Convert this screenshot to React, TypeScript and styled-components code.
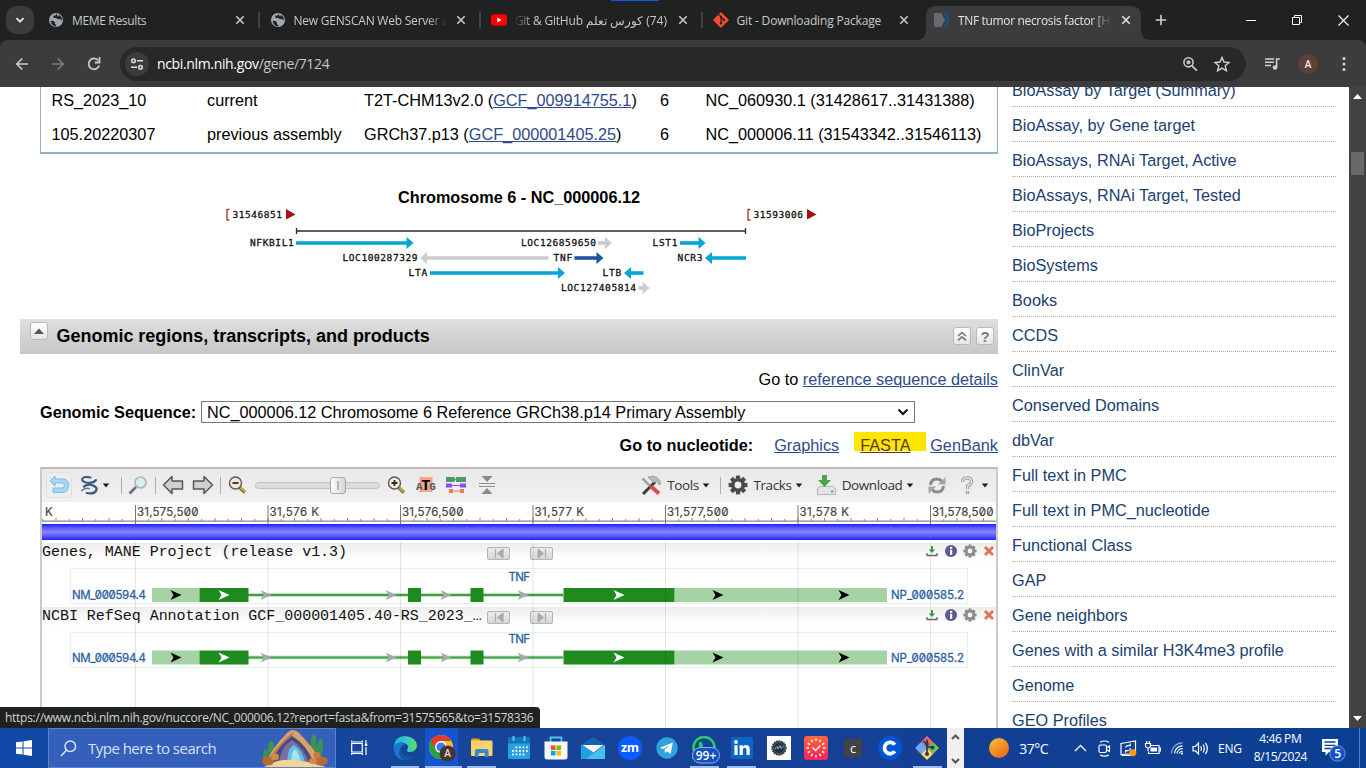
import React from "react";
import styled, { createGlobalStyle, css } from "styled-components";

const ui = `"Open Sans", "Noto Sans", sans-serif`;
const arial = `"Liberation Sans", Arial, sans-serif`;

const Global = createGlobalStyle`
  * { box-sizing: border-box; }
  html, body { margin: 0; padding: 0; }
  body { width: 1366px; height: 768px; overflow: hidden; background: #fff; }
  svg { display: block; flex: none; }
`;

const Screen = styled.div`
  position: relative;
  width: 1366px;
  height: 768px;
  display: flex;
  flex-direction: column;
  overflow: hidden;
  font-family: ${arial};
`;

/* ---------- browser chrome ---------- */

const TabStrip = styled.div`
  position: relative;
  height: 40px;
  flex: none;
  display: flex;
  background: #202221;
  font-family: ${ui};
`;
const LoadMark = styled.div`
  position: absolute;
  left: 611px;
  top: 0;
  width: 48px;
  height: 1px;
  background: #0b57ff;
`;
const TabSearch = styled.div`
  width: 28px;
  height: 28px;
  margin: 6px 4px 0 6px;
  border-radius: 10px;
  background: #3b3b3b;
  display: flex;
  align-items: center;
  justify-content: center;
  flex: none;
`;
const Tab = styled.div<{ $active?: boolean; $sep?: boolean }>`
  position: relative;
  width: 221.5px;
  height: 40px;
  padding-left: 10px;
  display: flex;
  align-items: center;
  flex: none;
  color: ${(p) => (p.$active ? "#e3e3e3" : "#c7c9c8")};
  ${(p) =>
    p.$sep &&
    css`
      &::after {
        content: "";
        position: absolute;
        right: 0;
        top: 12px;
        width: 2px;
        height: 16px;
        background: #414342;
      }
    `}
  > * { position: relative; }
`;
const TabShape = styled.svg`
  && { position: absolute; }
  left: -8px;
  top: 6px;
`;
const TabTitle = styled.div<{ $fade?: "left" | "right"; $ls?: number }>`
  width: 152px;
  margin-left: 8px;
  margin-right: 7.5px;
  overflow: hidden;
  white-space: nowrap;
  font-size: 12px;
  line-height: 21px;
  letter-spacing: ${(p) => p.$ls ?? -0.2}px;
  direction: ${(p) => (p.$fade === "left" ? "rtl" : "ltr")};
  ${(p) => p.$fade && `mask-image: linear-gradient(to ${p.$fade}, #000 88%, transparent 101%);`}
`;
const NewTab = styled.div`
  width: 31px;
  height: 40px;
  display: flex;
  align-items: center;
  justify-content: center;
`;
const WinButtons = styled.div`
  margin-left: auto;
  display: flex;
`;
const WinButton = styled.div`
  width: 46px;
  height: 40px;
  display: flex;
  align-items: center;
  justify-content: center;
`;
const ToolbarBack = styled.div`
  background: #202221;
  flex: none;
`;
const Toolbar = styled.div`
  height: 47px;
  display: flex;
  align-items: center;
  padding-left: 4px;
  background: #3c3c3c;
  border-radius: 8px 8px 0 0;
  font-family: ${ui};
`;
const NavButton = styled.div`
  width: 36px;
  display: flex;
  justify-content: center;
`;
const Omnibox = styled.div`
  width: 1126px;
  height: 34px;
  margin-left: 8px;
  padding: 0 15px 0 5px;
  border-radius: 17px;
  background: #282828;
  display: flex;
  align-items: center;
`;
const SiteChip = styled.div`
  width: 24px;
  height: 24px;
  border-radius: 50%;
  background: #3c3c3c;
  display: flex;
  align-items: center;
  justify-content: center;
`;
const Url = styled.div`
  margin-left: 8px;
  flex: 1;
  font-size: 14px;
  line-height: 20px;
  letter-spacing: -0.35px;
  color: #fff;
  span { color: #c7c7c7; }
`;
const OmniIcon = styled.div`
  margin-left: 15px;
`;
const MediaIcon = styled.svg`
  margin: 0 10px 0 18px;
`;
const Avatar = styled.div`
  width: 20px;
  height: 20px;
  margin: 0 8px;
  border-radius: 50%;
  background: #5d4037;
  color: #f1ebe9;
  font-size: 10px;
  font-weight: 600;
  line-height: 20px;
  text-align: center;
`;

/* ---------- page ---------- */

const Viewport = styled.div`
  height: 641px;
  flex: none;
  display: flex;
  overflow: hidden;
  background: #fff;
`;
const Main = styled.main`
  width: 978px;
  margin-left: 20px;
  flex: none;
  font-size: 16.25px;
`;
const Assemblies = styled.div`
  height: 67px;
  margin-left: 20px;
  border: solid #97b0c8;
  border-width: 0 1px 2px;
  overflow: hidden;
`;
const AssemblyRow = styled.div`
  display: grid;
  grid-template-columns: 155.5px 157px 296px 45.5px 1fr;
  height: 34px;
  line-height: 27px;
  padding-left: 10.500px;
  white-space: nowrap;
`;
const Link = styled.a<{ $marked?: boolean }>`
  color: ${(p) => (p.$marked ? "#61381a" : "#2f4a8b")};
  text-decoration: underline;
  text-decoration-thickness: 1px;
`;
const MapTitle = styled.h3`
  margin: 33px 0 0 20px;
  height: 20px;
  line-height: 20px;
  font-size: 16.25px;
  text-align: center;
`;
const MapArea = styled.div`
  height: 112px;
  margin-left: 180px;
`;
const SectionBar = styled.div`
  height: 35px;
  display: flex;
  align-items: center;
  padding: 0 4px 0 10px;
  background: linear-gradient(#dfdfdf, #c7c7c7);
`;
const SectionTitle = styled.h2`
  margin: 0 0 0 8.500px;
  flex: 1;
  font-size: 18px;
  line-height: 35px;
  letter-spacing: -0.02px;
`;
const SmallButton = styled.div<{ $raised?: boolean }>`
  width: 18px;
  height: 18px;
  margin-left: ${(p) => (p.$raised ? 0 : 5)}px;
  margin-bottom: ${(p) => (p.$raised ? 12 : 1)}px;
  border-radius: 3px;
  border: 1px solid #b9b9b9;
  background: linear-gradient(#fff, #e6e6e6);
  display: flex;
  align-items: center;
  justify-content: center;
  color: #7c7c7c;
  font: bold 15px/17px ${arial};
`;
const DetailLine = styled.div`
  height: 20px;
  margin-top: 15px;
  line-height: 20px;
  text-align: right;
`;
const SequenceLine = styled.div`
  display: flex;
  align-items: center;
  height: 22px;
  margin: 12px 0 0 20px;
  b { width: 161px; }
`;
const Select = styled.div`
  width: 714px;
  height: 22px;
  padding: 0 5px;
  border: 1px solid #767676;
  display: flex;
  align-items: center;
  justify-content: space-between;
  line-height: 20px;
`;
const NucleotideLine = styled.div`
  display: flex;
  justify-content: flex-end;
  height: 20px;
  margin-top: 9px;
  line-height: 26px;
  b { margin-right: 21px; }
`;
const Marker = styled.span`
  width: 72px;
  height: 19px;
  margin: 0 4px 0 15px;
  padding-left: 6px;
  background: #ffe600;
`;

const Viewer = styled.section`
  position: relative;
  height: 262px;
  margin: 15px 0 0 20px;
  border: solid #cacaca;
  border-width: 2px 2px 0 2px;
  border-top-color: #c3b9b9;
`;
const ViewerTools = styled.div`
  height: 33px;
  padding-bottom: 1px;
  display: flex;
  align-items: center;
  background: linear-gradient(#e9e9e9, #f0f0f0);
  font-family: ${ui};
  font-size: 13.5px;
  color: #333;
`;
const Slot = styled.div<{ $ml: number; $w: number }>`
  margin-left: ${(p) => p.$ml}px;
  width: ${(p) => p.$w}px;
  flex: none;
  display: flex;
  justify-content: center;
  white-space: nowrap;
  letter-spacing: -0.4px;
`;
const Divider = styled.div<{ $ml: number }>`
  margin-left: ${(p) => p.$ml}px;
  width: 1px;
  height: 17px;
  flex: none;
  background: #b6ac9c;
`;
const Framed = styled.div`
  width: 26px;
  height: 26px;
  border: 1px solid #dbe0e6;
  border-radius: 4px;
  background: #eceef0;
  display: flex;
  align-items: center;
  justify-content: center;
`;
const Slider = styled.div`
  width: 125px;
  height: 7px;
  margin-top: 1px;
  border: 1px solid #c3c3c3;
  border-radius: 4px;
  background: #dcdcdc;
  display: flex;
  align-items: center;
  padding-left: 74px;
`;
const SliderThumb = styled.div`
  width: 16px;
  height: 17px;
  flex: none;
  border: 1px solid #a9a9a9;
  border-radius: 3px;
  background: linear-gradient(90deg, #fff, #d4d4d4);
  display: flex;
  align-items: center;
  justify-content: center;
  &::after { content: ""; width: 2px; height: 9px; background: #b4b4b4; }
`;
const SequenceBar = styled.div`
  height: 16px;
  margin-bottom: 3px;
  background: linear-gradient(#2020ff, #5a5aff 25%, #8484ff 50%, #5a5aff 75%, #2020ff);
`;
const Track = styled.div`
  height: 64px;
`;
const TrackHead = styled.div`
  height: 24px;
  display: flex;
  align-items: flex-start;
  background: linear-gradient(#ededed, #fdfdfd 60%, #fff);
`;
const TrackName = styled.div`
  width: 445px;
  height: 18px;
  line-height: 19px;
  font-family: "Liberation Mono", monospace;
  font-size: 15px;
  letter-spacing: -0.03px;
  white-space: pre;
  color: #111;
`;
const StepButton = styled.div<{ $gap?: boolean }>`
  width: 23px;
  height: 13px;
  margin-top: 4px;
  margin-left: ${(p) => (p.$gap ? 20 : 0)}px;
  border: 1px solid #b4b4b4;
  border-radius: 2px;
  background: linear-gradient(#ececec, #d6d6d6);
  display: flex;
  align-items: center;
  justify-content: center;
`;
const TrackIcons = styled.div`
  margin: 1px 0 0 auto;
  display: flex;
  gap: 5px;
`;
const GridOverlay = styled.svg`
  position: absolute;
  left: 0;
  top: 73px;
  pointer-events: none;
`;
const TrackCanvas = styled.svg`
  font-family: Inter, sans-serif;
  font-size: 11.5px;
  font-feature-settings: "zero";
`;

const Side = styled.aside`
  width: 324px;
  margin: -15px 13px 0 14px;
  flex: none;
`;
const SideItem = styled.div`
  height: 35px;
  line-height: 36px;
  border-bottom: 1px dotted #b5b5b5;
  color: #20406f;
  font-size: 16.25px;
  white-space: nowrap;
`;
const ScrollTrack = styled.div`
  width: 17px;
  flex: none;
  background: #424242;
  display: flex;
  flex-direction: column;
  align-items: center;
  padding: 7px 0;
`;
const ScrollThumb = styled.div`
  width: 13px;
  height: 23px;
  margin: 53px 0 auto;
  background: #686868;
`;
const StatusBubble = styled.div`
  position: absolute;
  left: 0;
  top: 707px;
  width: 540px;
  height: 21px;
  padding-left: 5px;
  border-radius: 0 4px 0 0;
  background: #202221;
  color: #d2d4d3;
  font: 12px/21px ${ui};
  letter-spacing: -0.27px;
  white-space: nowrap;
`;

/* ---------- taskbar ---------- */

const Taskbar = styled.div`
  height: 40px;
  flex: none;
  display: flex;
  background: linear-gradient(90deg, #1149a8, #17459a 35%, #143f93 68%, #0a3f93);
  font-family: ${ui};
  color: #fff;
`;
const StartButton = styled.div`
  width: 48px;
  display: flex;
  align-items: center;
  justify-content: center;
`;
const SearchBox = styled.div`
  width: 288px;
  height: 40px;
  border: 1px solid #5d80ca;
  background: #345fbb;
  display: flex;
  align-items: center;
  padding-left: 11px;
  color: #d7e1f5;
  font-size: 15px;
  letter-spacing: -0.52px;
  span { margin-left: 11px; width: 173px; white-space: nowrap; }
`;
const TaskIcon = styled.div<{ $w: number; $ml?: number; $on?: boolean; $run?: boolean }>`
  position: relative;
  width: ${(p) => p.$w}px;
  margin-left: ${(p) => p.$ml ?? 0}px;
  height: 40px;
  flex: none;
  display: flex;
  align-items: center;
  justify-content: center;
  background: ${(p) => (p.$on ? "#1454cc" : "transparent")};
  ${(p) =>
    p.$run &&
    css`
      &::after {
        content: "";
        position: absolute;
        bottom: 0;
        left: ${p.$on ? "0" : "4px"};
        right: ${p.$on ? "-4px" : "4px"};
        height: 2px;
        background: #a3bdf3;
      }
    `}
`;
const Spinner = styled.div`
  width: 17px;
  margin-left: 1.5px;
  background: #f0f0f0;
  display: flex;
  flex-direction: column;
  justify-content: space-between;
  align-items: center;
  padding: 6px 0 4px;
  flex: none;
`;
const Weather = styled.div`
  display: flex;
  align-items: center;
  margin-left: 25px;
  width: 80px;
  flex: none;
  font-size: 14px;
  letter-spacing: -0.5px;
  span { margin-left: 10px; }
`;
const TrayItem = styled.div<{ $w: number }>`
  width: ${(p) => p.$w}px;
  display: flex;
  align-items: center;
  justify-content: center;
  flex: none;
  font-size: 12px;
  letter-spacing: -0.3px;
`;
const Clock = styled.div`
  width: 64px;
  padding-top: 2px;
  flex: none;
  text-align: center;
  white-space: nowrap;
  font-size: 12px;
  line-height: 18px;
  letter-spacing: -0.42px;
`;
const DesktopEdge = styled.div`
  width: 1px;
  margin-left: 2px;
  background: #5b80bd;
`;

/* ---------- icons ---------- */

const Globe = () => (
  <svg width="16" height="16" viewBox="0 0 16 16">
    <circle cx="8" cy="8" r="7" fill="#a3a8af" />
    <path d="M2.6 8.8l3 .2 1.4 1.5v1.6l1.4 1.2-.2 1.2A6 6 0 0 1 2.6 8.8zM8.3 1.8l-.8 1.7H5.7L5 5l1 1h2.4l1.3 1.2 2.4-.2L14 8.7A6 6 0 0 0 11 3l-1 1.6z" fill="#242625" />
    <path d="M9.4 8.3l3 .6-.7 2.1-1.5.6z" fill="#a3a8af" />
  </svg>
);
const YouTube = () => (
  <svg width="16" height="16" viewBox="0 0 16 16">
    <rect y="2.2" width="16" height="11.6" rx="3" fill="#f00" />
    <path d="M6.3 5.4v5.2L10.6 8z" fill="#fff" />
  </svg>
);
const Git = () => (
  <svg width="16" height="16" viewBox="0 0 16 16">
    <path d="M8 .2L15.8 8 8 15.8.2 8z" fill="#f4502f" stroke="#f4502f" strokeWidth=".4" strokeLinejoin="round" />
    <path d="M5.8 2.6L8 4.8v6.500M8 5.200l3 3" stroke="#28201e" strokeWidth="1.2" fill="none" />
    <circle cx="8" cy="4.900" r="1.2" fill="#28201e" />
    <circle cx="8" cy="11.200" r="1.2" fill="#28201e" />
    <circle cx="11" cy="8" r="1.2" fill="#28201e" />
  </svg>
);
const Ncbi = () => (
  <svg width="16" height="16" viewBox="0 0 16 16">
    <path d="M0 1h7l4 7-4 7H1.500Q0 15 0 13z" fill="#666a72" />
    <path d="M10 1h2.600l3.400 7-3.400 7H10l3-7z" fill="#14528f" />
  </svg>
);
const CloseX = ({ color = "#c7c9c8" }: { color?: string }) => (
  <svg width="16" height="16" viewBox="0 0 16 16">
    <path d="M4.300 4.300l7.400 7.400M11.700 4.300l-7.400 7.400" stroke={color} strokeWidth="1.600" />
  </svg>
);
const Caret = () => (
  <svg width="8" height="5" viewBox="0 0 8 5">
    <path d="M.8.500h6.400L4 4.600z" fill="#1c1c1c" />
  </svg>
);
const Lens = ({ sign }: { sign: "+" | "-" }) => (
  <svg width="20" height="20" viewBox="0 0 20 20">
    <path d="M12.500 12.500l5.500 5" stroke="#7d7020" strokeWidth="3.400" />
    <path d="M13 12.500l5 4.400" stroke="#d6c95f" strokeWidth="1.100" />
    <circle cx="8.500" cy="8" r="6" fill="#f2ead8" stroke="#5e5a55" strokeWidth="1.400" />
    <path d={sign === "+" ? "M5.500 8h6M8.500 5v6" : "M5.500 8h6"} stroke="#2d2a28" strokeWidth="1.800" />
  </svg>
);
const BlockArrow = ({ flip }: { flip?: boolean }) => (
  <svg width="22" height="20" viewBox="0 0 22 20">
    <path
      transform={flip ? "translate(22 0) scale(-1 1)" : undefined}
      d="M1.500 10L10 1.500V6h10.500v8H10v4.500z"
      fill="#cfcfcf"
      stroke="#555"
      strokeWidth="1.500"
      strokeLinejoin="round"
    />
  </svg>
);
const Gear = ({ size, color, hole }: { size: number; color: string; hole: string }) => (
  <svg width={size} height={size} viewBox="0 0 20 20">
    {[0, 45, 90, 135].map((a) => (
      <rect key={a} x="7.900" y=".6" width="4.200" height="18.800" fill={color} transform={`rotate(${a} 10 10)`} />
    ))}
    <circle cx="10" cy="10" r="7" fill={color} />
    <circle cx="10" cy="10" r="3.400" fill={hole} />
  </svg>
);
const TrackTools = () => (
  <>
    <svg width="14" height="14" viewBox="0 0 14 14">
      <path d="M7 2v5" stroke="#35a435" strokeWidth="2" />
      <path d="M3.700 5.500h6.600L7 9z" fill="#35a435" />
      <path d="M2 9v2.500h10V9" stroke="#666" strokeWidth="1.300" fill="none" />
    </svg>
    <svg width="14" height="14" viewBox="0 0 14 14">
      <circle cx="7" cy="7" r="6" fill="#5b5a97" />
      <rect x="6" y="5.800" width="2.200" height="5" fill="#fff" />
      <rect x="6" y="2.800" width="2.200" height="2" fill="#fff" />
    </svg>
    <Gear size={14} color="#8a8a8a" hole="#f6f6f6" />
    <svg width="14" height="14" viewBox="0 0 14 14">
      <path d="M3 3l8 8M11 3l-8 8" stroke="#df7556" strokeWidth="3" />
    </svg>
  </>
);

/* ---------- chromosome map ---------- */

const CYAN = "#02a5d3";
const GREY = "#cbcbcb";
type Gene = { name: string; tx: number; from: number; to: number; y: number; color: string };
const genes: Gene[] = [
  { name: "NFKBIL1", tx: 250, from: 296, to: 413.5, y: 243, color: CYAN },
  { name: "LOC100287329", tx: 342.5, from: 548.5, to: 420, y: 258, color: GREY },
  { name: "LTA", tx: 408.5, from: 430, to: 565, y: 273, color: CYAN },
  { name: "LOC126859650", tx: 521, from: 598, to: 612, y: 243, color: GREY },
  { name: "TNF", tx: 553.5, from: 574.5, to: 603.5, y: 258, color: "#20549a" },
  { name: "LTB", tx: 602.5, from: 643.5, to: 624, y: 273, color: CYAN },
  { name: "LOC127405814", tx: 561, from: 638.5, to: 649.5, y: 288, color: GREY },
  { name: "LST1", tx: 652.5, from: 680, to: 705.5, y: 243, color: CYAN },
  { name: "NCR3", tx: 677.5, from: 746, to: 705, y: 258, color: CYAN },
];
const mapEnds = [
  { x: 226.5, label: "31546851" },
  { x: 747.5, label: "31593006" },
];
const GeneMap = () => (
  <svg width="640" height="90" viewBox="200 207 640 90" fontFamily='"DejaVu Sans Mono", monospace' fontSize="9.5">
    {mapEnds.map(({ x, label }) => (
      <g key={label}>
        <path d={`M${x + 3} 209.500h-2.500v10.500h2.500`} fill="none" stroke="#b03a3a" strokeWidth="1.400" />
        <text x={x + 6} y="217.500" textLength="49.500" fill="#111" stroke="#111" strokeWidth=".3">{label}</text>
        <path d={`M${x + 59.5} 209l9.500 5.500-9.500 5z`} fill="#a51216" />
      </g>
    ))}
    <path d="M296.500 231H745.500M296.500 228v6M745.500 228v6" stroke="#2b2b2b" strokeWidth="1.300" />
    {genes.map((g) => {
      const d = g.to > g.from ? -1 : 1;
      return (
        <g key={g.name}>
          <text x={g.tx} y={g.y + 3} textLength={g.name.length * 6.25} fill="#111" stroke="#111" strokeWidth=".3">{g.name}</text>
          <path d={`M${g.from} ${g.y}H${g.to + d * 5}`} stroke={g.color} strokeWidth="3.600" />
          <path d={`M${g.to} ${g.y}l${d * 7} -6v12z`} fill={g.color} />
        </g>
      );
    })}
  </svg>
);

/* ---------- sequence viewer canvas ---------- */

const majors = [135.5, 268, 400.5, 533, 665.5, 798, 930.5];
const majorText = ["31,575,500", "31,576 K", "31,576,500", "31,577 K", "31,577,500", "31,578 K", "31,578,500"];
const Ruler = () => (
  <TrackCanvas width="954" height="22" viewBox="42 502 954 22" fill="#444">
    <rect x="42" y="502" width="954" height="22" fill="#fff" />
    <g stroke="#444" strokeWidth=".2"><text x="45" y="515.500">K</text></g>
    <path d="M42 521.200H996" stroke="#888" strokeWidth="1.200" />
    {Array.from({ length: 72 }, (_, i) => (
      <path key={i} d={`M${42.75 + i * 13.25} 521v${i % 2 ? -3 : -2}`} stroke="#888" />
    ))}
    {majors.map((x, i) => (
      <g key={x}>
        <path d={`M${x} 505V524`} stroke="#777" />
        <text x={x + 1.5} y="515.500" textLength={i % 2 ? 49.5 : 61.5} stroke="#444" strokeWidth=".2">{majorText[i]}</text>
      </g>
    ))}
  </TrackCanvas>
);
const Dart = ({ x, y, c }: { x: number; y: number; c: string }) => (
  <path d={`M${x - 5.5} ${y - 5}L${x + 5.5} ${y}L${x - 5.5} ${y + 5}L${x - 2.5} ${y}z`} fill={c} />
);
const GeneTrack = ({ y }: { y: number }) => (
  <TrackCanvas width="954" height="40" viewBox="42 0 954 40" fill="#2f5f9f">
    <rect x="70.500" y="1.500" width="897" height="35" fill="none" stroke="#e2f5e2" />
    <path d={`M248 ${y}H563`} stroke="#c5e5c5" strokeWidth="4" />
    <path d={`M248 ${y}H563`} stroke="#3f9f3f" strokeWidth="2" />
    <rect x="152" y={y - 7} width="47.500" height="14" fill="#a6d3a6" />
    <rect x="674.500" y={y - 7} width="212.500" height="14" fill="#a6d3a6" />
    <rect x="199.500" y={y - 7} width="49" height="14" fill="#1f8b1f" />
    <rect x="408" y={y - 7} width="13" height="14" fill="#1f8b1f" />
    <rect x="470.500" y={y - 7} width="13" height="14" fill="#1f8b1f" />
    <rect x="563.500" y={y - 7} width="111" height="14" fill="#1f8b1f" />
    {[176, 718, 844].map((x) => <Dart key={x} x={x} y={y} c="#000" />)}
    {[224, 619].map((x) => <Dart key={x} x={x} y={y} c="#fff" />)}
    {[266, 391, 446, 523].map((x) => <Dart key={x} x={x} y={y} c="#a9a9a9" />)}
    <g stroke="#2f5f9f" strokeWidth=".3">
      <text x="508.500" y={y - 14.5} textLength="21.500">TNF</text>
      <text x="72" y={y + 4} textLength="74">NM_000594.4</text>
      <text x="891" y={y + 4} textLength="73">NP_000585.2</text>
    </g>
  </TrackCanvas>
);
const TrackRow = ({ name, y }: { name: string; y: number }) => (
  <Track>
    <TrackHead>
      <TrackName>{name}</TrackName>
      <StepButton>
        <svg width="10" height="9" viewBox="0 0 10 9"><path d="M1.500 0v9M4 4.500L9 0v9z" stroke="#aaa" strokeWidth="1.200" fill="#aaa" /></svg>
      </StepButton>
      <StepButton $gap>
        <svg width="10" height="9" viewBox="0 0 10 9"><path d="M8.500 0v9M6 4.500L1 0v9z" stroke="#aaa" strokeWidth="1.200" fill="#aaa" /></svg>
      </StepButton>
      <TrackIcons><TrackTools /></TrackIcons>
    </TrackHead>
    <GeneTrack y={y} />
  </Track>
);

const sideItems = [
  "BioAssay by Target (Summary)", "BioAssay, by Gene target", "BioAssays, RNAi Target, Active",
  "BioAssays, RNAi Target, Tested", "BioProjects", "BioSystems", "Books", "CCDS", "ClinVar",
  "Conserved Domains", "dbVar", "Full text in PMC", "Full text in PMC_nucleotide", "Functional Class",
  "GAP", "Gene neighbors", "Genes with a similar H3K4me3 profile", "Genome", "GEO Profiles",
];

const rows = [
  ["RS_2023_10", "current", "T2T-CHM13v2.0", "GCF_009914755.1", "NC_060930.1 (31428617..31431388)"],
  ["105.20220307", "previous assembly", "GRCh37.p13", "GCF_000001405.25", "NC_000006.11 (31543342..31546113)"],
];

const ViewerToolbar = () => (
  <ViewerTools>
    <Slot $ml={4} $w={26}>
      <Framed>
        <svg width="20" height="20" viewBox="0 0 20 20">
          <path d="M6 1L1 6l5 5V8h7q2.500 0 2.500 2.500T13 13H4v4.500h10q5.500-.5 5.500-7T14 4H6z" fill="#a8d8f3" stroke="#7ab9e0" />
        </svg>
      </Framed>
    </Slot>
    <Slot $ml={8} $w={18}>
      <svg width="18" height="19" viewBox="0 0 18 19" fill="none" stroke="#3d5c7d" strokeLinecap="round">
        <path d="M10.500 1.500Q4 0 2.500 2.500T6 6.500Q13 8 16 4" strokeWidth="2.100" />
        <path d="M4 10.500Q8 7.500 13 9.500T16 15Q13.500 18.500 7 17" strokeWidth="2.300" />
        <path d="M2 14.500Q5 11.500 9 12.500" stroke="#56779a" strokeWidth="1.700" />
      </svg>
    </Slot>
    <Slot $ml={4} $w={8}><Caret /></Slot>
    <Divider $ml={11} />
    <Slot $ml={5} $w={22}>
      <svg width="20" height="19" viewBox="0 0 20 19">
        <path d="M8 11l-6.500 6.500" stroke="#6d6d6d" strokeWidth="2.600" />
        <circle cx="12.500" cy="6.500" r="5.500" fill="#dcebef" stroke="#a8b4b8" strokeWidth="1.600" />
      </svg>
    </Slot>
    <Divider $ml={6} />
    <Slot $ml={6} $w={22}><BlockArrow /></Slot>
    <Slot $ml={8} $w={22}><BlockArrow flip /></Slot>
    <Divider $ml={6} />
    <Slot $ml={5} $w={22}><Lens sign="-" /></Slot>
    <Slot $ml={7} $w={125}><Slider><SliderThumb /></Slider></Slot>
    <Slot $ml={5} $w={22}><Lens sign="+" /></Slot>
    <Slot $ml={8} $w={22}>
      <svg width="20" height="18" viewBox="0 0 20 18" fontFamily='"Liberation Mono", monospace' fontWeight="700">
        <rect x="3.500" y="1" width="13" height="15" fill="#f1a88a" />
        <text x="0" y="13.500" fontSize="11" fill="#555">A</text>
        <text x="5.300" y="13.500" fontSize="15" fill="#000">T</text>
        <text x="13.300" y="13.500" fontSize="11" fill="#555">G</text>
      </svg>
    </Slot>
    <Slot $ml={8} $w={22}>
      <svg width="20" height="16" viewBox="0 0 20 16">
        <path d="M0 0h8l2 2.500L8 5H0zM10 0h10v5H10z" fill="#4b9a6a" />
        <path d="M0 6.500h6v4H0zM14 6.500h6v4h-6zM6 8h8v1H6z" fill="#8a4dfb" />
        <path d="M3 12h4v4H3zM14 12h4v4h-4zM7 13.500h7v1H7z" fill="#e87b5c" />
      </svg>
    </Slot>
    <Slot $ml={9} $w={22}>
      <svg width="18" height="18" viewBox="0 0 18 18" fill="#8c8c8c">
        <path d="M3.500 0h11L9 6zM3.500 18h11L9 12zM1 7h16v1H1zM1 10h16v1H1z" />
      </svg>
    </Slot>
    <Slot $ml={142} $w={22}>
      <svg width="20" height="20" viewBox="0 0 20 20">
        <path d="M2 19L14 7" stroke="#3e3e3e" strokeWidth="3" />
        <path d="M7 2l5-1q6 1 8 8l-2.500.5-2-3.500-3 1.500L9.500 5z" fill="#b9b9b9" stroke="#888" strokeWidth=".6" />
        <path d="M1.500 3.500L9 11" stroke="#a3a3a3" strokeWidth="2.500" />
        <path d="M10 11.500l8 7" stroke="#e0484c" strokeWidth="4" />
      </svg>
    </Slot>
    <Slot $ml={5} $w={32}>Tools</Slot>
    <Slot $ml={3} $w={8}><Caret /></Slot>
    <Divider $ml={10} />
    <Slot $ml={6} $w={22}><Gear size={20} color="#4a4a4a" hole="#eee" /></Slot>
    <Slot $ml={4} $w={39}>Tracks</Slot>
    <Slot $ml={3} $w={8}><Caret /></Slot>
    <Slot $ml={12} $w={22}>
      <svg width="21" height="20" viewBox="0 0 21 20">
        <path d="M1.500 14l2-2.500h14l2 2.500v5.500h-18z" fill="#e4e4e4" stroke="#b5b5b5" />
        <path d="M6 0h5v5h4l-6.500 7L2 5h4z" fill="#44a944" />
        <rect x="15" y="15.500" width="2.500" height="2" fill="#4cc24c" />
      </svg>
    </Slot>
    <Slot $ml={5} $w={60}>Download</Slot>
    <Slot $ml={4} $w={8}><Caret /></Slot>
    <Slot $ml={12} $w={22}>
      <svg width="20" height="19" viewBox="0 0 20 19" fill="none" stroke="#8b8b8b" strokeWidth="3">
        <path d="M3.500 9Q4 3 10 3q3 0 5 2.500M16.500 10Q16 16 10 16q-3 0-5-2.500" />
        <path d="M18.500 1v7.500H11zM1.500 18v-7.500H9z" fill="#a5a5a5" stroke="none" />
      </svg>
    </Slot>
    <Slot $ml={8} $w={22}>
      <svg width="14" height="19" viewBox="0 0 14 19" fill="none">
        <path d="M2.500 6Q2.500 2 7 2t4.500 3.500Q11.500 8 7.500 10v3M7.500 15v3" stroke="#8f8f8f" strokeWidth="3.200" />
        <path d="M2.500 6Q2.500 2 7 2t4.500 3.500Q11.500 8 7.500 10v3M7.500 15.500v2" stroke="#e6e6e6" strokeWidth="1.500" />
      </svg>
    </Slot>
    <Slot $ml={3} $w={8}><Caret /></Slot>
  </ViewerTools>
);

/* ---------- taskbar art ---------- */

const Tent = () => (
  <svg width="70" height="38" viewBox="0 0 70 38">
    <path d="M3 34Q0 22 5 20q4 3 2 14zM8 26Q5 14 10 11q5 3 2 15zM50 24Q48 8 53 4q4 3 2 22zM56 30Q54 14 60 9q4 3 0 20z" fill="#3f9152" />
    <path d="M5 34Q10 20 26 4Q32-2 38 4Q50 16 62 34z" fill="#d9a06c" />
    <path d="M6 33Q14 20 27 7l6-4-4 8-16 24z" fill="#b87a50" />
    <path d="M10 34Q16 18 31 7q14 8 22 27z" fill="#4a4880" />
    <path d="M18 34Q20 17 31 11q12 8 17 23z" fill="#746fa5" />
    <path d="M27 35Q25 20 33 16q9 5 11 19z" fill="#62bfe0" />
    <path d="M31 35q-2-12 3-15 5 5 6 15z" fill="#a8e2f2" />
    <path d="M3 38Q16 29 34 31t31 7z" fill="#f3d591" />
    <ellipse cx="7" cy="32" rx="6" ry="4.500" fill="#b66b35" />
    <ellipse cx="14" cy="28" rx="4" ry="3.500" fill="#d0884b" />
    <ellipse cx="60" cy="32" rx="7" ry="4.500" fill="#b66b35" />
    <ellipse cx="52" cy="32" rx="4" ry="3" fill="#d0884b" />
    <ellipse cx="56" cy="26" rx="3.500" ry="3" fill="#c77b40" />
  </svg>
);
const TILE = 37.15;
const calendarDots = [
  [7.5, 10.5], [11, 10.5], [14.5, 10.5], [18, 10.5],
  [4, 14], [7.5, 14], [11, 14], [14.5, 14], [18, 14],
  [4, 17.5], [7.5, 17.5], [11, 17.5], [14.5, 17.5],
];

const TaskIcons = () => (
  <>
    <TaskIcon $w={46}>
      <svg width="17" height="16" viewBox="0 0 17 16" fill="none" stroke="#fff" strokeWidth="1.200"><path d="M.7 3.500h10.600v8.500H.7zM.7.500v1.500h10.600V.500M.7 15v-1.500h10.600V15M15 0v3.500M15 7v8" /><path d="M13.800 3.500h2.500v2.500h-2.500z" fill="#fff" stroke="none" /></svg>
    </TaskIcon>
    <TaskIcon $w={36} $ml={5} $run>
      <svg width="24" height="24" viewBox="0 0 24 24">
        <defs><linearGradient id="ed" x1="0" y1="0" x2="1" y2="0"><stop offset="0" stopColor="#2aa8e8" /><stop offset=".6" stopColor="#36d0c0" /><stop offset="1" stopColor="#63dd55" /></linearGradient></defs>
        <path d="M.5 11Q2 0 12 0q11 1 12 9.500-.5 6-7 6.500-3.500 0-3-2 2-3 0-5.500Q10.500 5.500 6 7T.5 12z" fill="url(#ed)" />
        <path d="M.5 11Q3 6 8.500 6.500q3 .5 4 2-4.500 0-5 5Q7.500 21 14 24h-2Q1 23.500.5 11z" fill="#1b76cf" />
        <path d="M8.500 11q-2 5 2.500 8.500 5 3.500 11-.5Q18 25 12 24 4 21 7 13z" fill="#155a9d" />
      </svg>
    </TaskIcon>
    <TaskIcon $w={33} $ml={2} $on $run>
      <svg width="30" height="28" viewBox="0 0 30 28">
        <circle cx="14" cy="13" r="12" fill="#fbc116" />
        <path d="M3.600 7A12 12 0 0 0 14 25l5-9-5-3z" fill="#27a147" />
        <path d="M14 7h10.400A12 12 0 0 0 3.600 7L9 16z" fill="#e33b2e" />
        <circle cx="14" cy="13" r="6" fill="#fff" /><circle cx="14" cy="13" r="4.500" fill="#3a7df0" />
        <circle cx="20.500" cy="19.500" r="8" fill="#4a332c" />
        <text x="20.500" y="23.300" fontSize="10" fontWeight="600" textAnchor="middle" fill="#ddd">A</text>
      </svg>
    </TaskIcon>
    <TaskIcon $w={TILE} $ml={5} $run>
      <svg width="22" height="20" viewBox="0 0 22 20"><path d="M0 2Q0 .5 1.500.5H8l2 2.500H0z" fill="#e29b1c" /><rect y="2.500" width="21.500" height="15.500" rx="1" fill="#fbd267" /><path d="M4 19v-6q0-2 2-2h9.500q2 0 2 2v6h-3.700v-4H7.700v4z" fill="#3388d6" /></svg>
    </TaskIcon>
    <TaskIcon $w={TILE}>
      <svg width="22" height="24" viewBox="0 0 22 24"><rect y="1.500" width="22" height="21.500" rx="1.500" fill="#2aa0e4" /><rect y="1.500" width="22" height="6" fill="#1674bd" /><path d="M5.500 0v5M16.500 0v5" stroke="#4fc3f3" strokeWidth="2" />{calendarDots.map(([x, y]) => <rect key={`${x}-${y}`} x={x} y={y} width="1.800" height="1.800" fill="#fff" />)}</svg>
    </TaskIcon>
    <TaskIcon $w={TILE}>
      <svg width="24" height="24" viewBox="0 0 24 24"><path d="M6.500 6V1.500h11V6" fill="none" stroke="#55bff0" strokeWidth="1.800" /><path d="M.5 5.500h23V21q0 2.500-2.500 2.500H3Q.5 23.500.5 21z" fill="#f7f7f7" /><path d="M7 9.500h4.500V14H7z" fill="#ef4f23" /><path d="M12.500 9.500H17V14h-4.500z" fill="#7fb900" /><path d="M7 15h4.500v4.500H7z" fill="#0aa3ee" /><path d="M12.500 15H17v4.500h-4.500z" fill="#fdb800" /></svg>
    </TaskIcon>
    <TaskIcon $w={TILE}>
      <svg width="24" height="22" viewBox="0 0 24 22"><path d="M0 8L12 0l12 8z" fill="#1465ae" /><path d="M1.500 8h21L12 16z" fill="#fafafa" /><path d="M0 7.500L12 15v7H0z" fill="#1fa0e2" /><path d="M24 7.500L5 22h19z" fill="#46c0f0" /></svg>
    </TaskIcon>
    <TaskIcon $w={TILE}>
      <svg width="24" height="24" viewBox="0 0 24 24"><circle cx="12" cy="12" r="12" fill="#0b5cff" /><text x="12" y="15.500" fontFamily={ui} fontSize="12.500" fontWeight="700" textAnchor="middle" textLength="18" fill="#fff">zm</text></svg>
    </TaskIcon>
    <TaskIcon $w={TILE}>
      <svg width="22" height="22" viewBox="0 0 22 22"><circle cx="11" cy="11" r="10.700" fill="#30a3dc" /><path d="M4 10.800L16.800 5.500 14.600 17l-3.800-2.800L9 16l-.5-3.500 6-5-7.200 4.400z" fill="#fff" /></svg>
    </TaskIcon>
    <TaskIcon $w={TILE} $run>
      <svg width="32" height="32" viewBox="0 0 32 32">
        <circle cx="16" cy="15.500" r="10.500" fill="none" stroke="#27cc66" strokeWidth="2.500" /><path d="M4 27l1.500-7 5 5z" fill="#27cc66" /><path d="M11 10h3l1 4-1 2 3 3-3 1q-4-4-3-10z" fill="#27cc66" />
        <rect x="4.500" y="15.500" width="27" height="15.500" rx="7.700" fill="#1550c0" stroke="#8fb0ea" />
        <text x="18" y="27.500" fontFamily={ui} fontSize="12" fontWeight="600" textAnchor="middle" textLength="20.500" fill="#fff">99+</text>
      </svg>
    </TaskIcon>
    <TaskIcon $w={TILE} $run>
      <svg width="22" height="22" viewBox="0 0 22 22"><rect width="22" height="22" rx="1.500" fill="#0b66c3" /><g fill="#fff"><circle cx="5" cy="5" r="1.900" /><path d="M3.400 8.300h3.200V18H3.400zM8.600 8.300h3v1.400q1-1.700 3.200-1.700 3.900 0 3.900 4.200V18h-3.200v-5q0-2.300-1.800-2.300-1.900 0-1.900 2.300v5H8.600z" /></g></svg>
    </TaskIcon>
    <TaskIcon $w={TILE}>
      <svg width="24" height="24" viewBox="0 0 24 24"><rect width="24" height="24" fill="#fff" /><circle cx="12" cy="12" r="7" fill="#1d3349" stroke="#3a4a52" strokeWidth="1.500" strokeDasharray="1.500 1" /><circle cx="12" cy="12" r="5.500" fill="none" stroke="#8a8468" strokeWidth=".5" /><path d="M7.500 13.500l2.500-3 1 2.500 2-3.500 1 3 2.500-2" stroke="#a9b4bc" strokeWidth=".9" fill="none" /></svg>
    </TaskIcon>
    <TaskIcon $w={TILE}>
      <svg width="24" height="24" viewBox="0 0 24 24"><defs><linearGradient id="ck" x1="0" y1="0" x2="0" y2="1"><stop offset="0" stopColor="#ff6b35" /><stop offset="1" stopColor="#ff1d5e" /></linearGradient></defs><rect width="24" height="24" rx="3" fill="url(#ck)" />{Array.from({ length: 12 }, (_, i) => <path key={i} d="M12 2.500v2.600" stroke="#fff" strokeWidth="1.500" transform={`rotate(${i * 30} 12 12)`} />)}<path d="M8.500 11.500l3 3 5-5" fill="none" stroke="#fff" strokeWidth="1.500" /></svg>
    </TaskIcon>
    <TaskIcon $w={TILE}>
      <svg width="18" height="18" viewBox="0 0 18 18"><rect width="18" height="18" rx="1" fill="#434343" /><text x="9" y="13.500" fontFamily={ui} fontSize="12.500" textAnchor="middle" fill="#fff">c</text></svg>
    </TaskIcon>
    <TaskIcon $w={TILE}>
      <svg width="24" height="24" viewBox="0 0 24 24"><circle cx="12" cy="12" r="12" fill="#0056d6" /><path d="M16.800 8.700A5.700 5.700 0 1 0 16.800 15.300" fill="none" stroke="#fff" strokeWidth="3.700" /></svg>
    </TaskIcon>
    <TaskIcon $w={TILE} $run>
      <svg width="24" height="24" viewBox="0 0 24 24"><path d="M12 0l6 6-6 6-6-6z" fill="#f0686c" /><path d="M18 6l6 6-6 6-6-6z" fill="#79c24c" /><path d="M6 6l6 6-6 6-6-6z" fill="#6fa8f0" /><path d="M12 12l6 6-6 6-6-6z" fill="#fbdc5c" /><path d="M12 3.500v15M12 11h5M8.500 5l3.500 4" stroke="#253560" strokeWidth="1.700" fill="none" /><circle cx="12" cy="18" r="2" fill="#253560" /><circle cx="17.500" cy="11.500" r="2" fill="#253560" /><circle cx="12" cy="8" r="1.800" fill="#253560" /></svg>
    </TaskIcon>
  </>
);

const Tray = () => (
  <>
    <TrayItem $w={22}>
      <svg width="13" height="8" viewBox="0 0 13 8"><path d="M1 7l5.500-5.500L12 7" fill="none" stroke="#fff" strokeWidth="1.300" /></svg>
    </TrayItem>
    <TrayItem $w={26}>
      <svg width="13" height="17" viewBox="0 0 13 17" fill="none" stroke="#fff" strokeWidth="1.200">
        <rect x="1" y="5" width="7.500" height="7.500" rx="1.500" />
        <path d="M8.500 7.800L11.500 6v5.500l-3-1.800M2 2.200q4.500-2.400 9 0M2 15q4.500 2.400 9 0" />
      </svg>
    </TrayItem>
    <TrayItem $w={22}>
      <svg width="17" height="17" viewBox="0 0 17 17" fill="none" stroke="#fff" strokeWidth="1.200">
        <path d="M1 3.500L15.500 1v12.500L1 14.500zM2 15.500h9" />
        <path d="M5.500 7.500Q6.500 5 10 5.500M10.500 8Q10 11 6 11M10.300 3.500v2.300H8M5.500 12.800v-2.300H8" strokeWidth="1.100" />
        <circle cx="12.700" cy="12.700" r="3.500" fill="#ff9a0a" stroke="none" />
      </svg>
    </TrayItem>
    <TrayItem $w={26}>
      <svg width="17" height="14" viewBox="0 0 17 14" fill="none" stroke="#fff" strokeWidth="1.200">
        <path d="M6.500 4.500h8.500v8H4.500v-2M15.500 7h1v3h-1" />
        <path d="M6.500 6.500h6.500v4H6.500z" fill="#fff" stroke="none" />
        <path d="M1.500 2.500h5v2.500q-.5 2-2.500 2t-2.500-2zM4 7v3M2.700 0v2.500M5.300 0v2.500" />
      </svg>
    </TrayItem>
    <TrayItem $w={24}>
      <svg width="14" height="14" viewBox="0 0 14 14" fill="none" strokeWidth="1.200">
        <path d="M1.500 12.500A11 11 0 0 1 12.500 1.800" stroke="#8fabdc" />
        <path d="M4.500 12.500A8.200 8.200 0 0 1 12.700 4.800M7 12.500A5.500 5.500 0 0 1 12.700 7.700M9.300 12.500A3 3 0 0 1 12.700 10.300" stroke="#fff" />
        <circle cx="12" cy="12.500" r="1.100" fill="#fff" />
      </svg>
    </TrayItem>
    <TrayItem $w={22}>
      <svg width="17" height="15" viewBox="0 0 17 15" fill="none" stroke="#fff" strokeWidth="1.200">
        <path d="M1 5.500h2.500L6.500 2v11L3.500 9.800H1zM8.700 5.200q1.400 2.300 0 4.600M11 3.500q2.600 4 0 8M13.400 1.800q3.800 5.700 0 11.400" />
      </svg>
    </TrayItem>
    <TrayItem $w={37}>ENG</TrayItem>
    <Clock>4:46 PM<br />8/15/2024</Clock>
    <TrayItem $w={45}>
      <svg width="27" height="28" viewBox="0 0 27 28">
        <path d="M1 5h16v13H8l-3.500 3.500V18H1z" fill="#fff" />
        <path d="M3.500 8h11M3.500 11.300h11M3.500 14.500h7" stroke="#0b3f95" strokeWidth="1.300" />
        <circle cx="16.500" cy="19.500" r="7.700" fill="#1450c4" stroke="#6f97de" />
        <text x="16.500" y="24" fontFamily={ui} fontSize="12" fontWeight="600" textAnchor="middle" fill="#fff">5</text>
      </svg>
    </TrayItem>
    <DesktopEdge />
  </>
);

export default function App() {
  return (
    <Screen>
      <Global />
      <TabStrip>
        <TabSearch>
          <svg width="12" height="12" viewBox="0 0 12 12"><path d="M2.500 4.200L6 7.700l3.500-3.500" fill="none" stroke="#e8e8e8" strokeWidth="1.800" /></svg>
        </TabSearch>
        <Tab $sep><Globe /><TabTitle $ls={-0.34}>MEME Results</TabTitle><CloseX /></Tab>
        <Tab $sep><Globe /><TabTitle $fade="right" $ls={-0.22}>New GENSCAN Web Server a</TabTitle><CloseX /></Tab>
        <Tab $sep><YouTube /><TabTitle $fade="left">(74) كورس تعلم Git &amp; GitHub</TabTitle><CloseX /></Tab>
        <Tab><Git /><TabTitle $ls={-0.17}>Git - Downloading Package</TabTitle><CloseX /></Tab>
        <Tab $active>
          <TabShape width="235" height="34" viewBox="0 0 235 34">
            <path d="M0 34Q10 34 10 24V10Q10 0 20 0h195Q225 0 225 10v14q0 10 10 10z" fill="#3c3c3c" />
          </TabShape>
          <Ncbi /><TabTitle $fade="right" $ls={-0.34}>TNF tumor necrosis factor [H</TabTitle><CloseX color="#e3e3e3" />
        </Tab>
        <NewTab>
          <svg width="12" height="12" viewBox="0 0 12 12"><path d="M6 .8v10.400M.8 6h10.400" stroke="#d0d0d0" strokeWidth="1.600" /></svg>
        </NewTab>
        <WinButtons>
          <WinButton><svg width="10" height="10" viewBox="0 0 10 10"><path d="M0 5.500h10" stroke="#fff" /></svg></WinButton>
          <WinButton>
            <svg width="10" height="10" viewBox="0 0 10 10" fill="none" stroke="#fff"><path d="M.5 2.500h7v7h-7zM2.500 2.500v-2h7v7h-2" /></svg>
          </WinButton>
          <WinButton><svg width="11" height="11" viewBox="0 0 11 11"><path d="M.5.500l10 10M10.500.500l-10 10" stroke="#fff" strokeWidth="1.100" /></svg></WinButton>
        </WinButtons>
        <LoadMark />
      </TabStrip>
      <ToolbarBack>
        <Toolbar>
          <NavButton><svg width="14" height="14" viewBox="0 0 14 14" fill="none" stroke="#c9c9c9" strokeWidth="1.700"><path d="M13 7H2M7.300 1.500L1.800 7l5.500 5.500" /></svg></NavButton>
          <NavButton><svg width="14" height="14" viewBox="0 0 14 14" fill="none" stroke="#7c7c7c" strokeWidth="1.700"><path d="M1 7h11M6.700 1.500L12.200 7l-5.500 5.500" /></svg></NavButton>
          <NavButton><svg width="14" height="14" viewBox="0 0 14 14" fill="none" stroke="#c9c9c9" strokeWidth="1.800"><path d="M12.200 8.500A5.400 5.400 0 1 1 11.300 3.500" /><path d="M12.500 0v5.500H7.800" /></svg></NavButton>
          <Omnibox>
            <SiteChip>
              <svg width="14" height="14" viewBox="0 0 14 14" fill="none" stroke="#dedede" strokeWidth="1.500">
                <circle cx="3.500" cy="3.800" r="1.800" /><path d="M7 3.800h6M1 10.200h6" /><circle cx="10.500" cy="10.200" r="1.800" />
              </svg>
            </SiteChip>
            <Url>ncbi.nlm.nih.gov<span>/gene/7124</span></Url>
            <svg width="16" height="16" viewBox="0 0 16 16" fill="none" stroke="#c9c9c9">
              <circle cx="6.500" cy="6.300" r="4.600" strokeWidth="1.600" /><path d="M9.800 9.600l5 5" strokeWidth="1.800" /><circle cx="6.500" cy="6.300" r="1.600" fill="#c9c9c9" />
            </svg>
            <OmniIcon>
              <svg width="18" height="18" viewBox="0 0 18 18"><path d="M9 2.500l2 4.500 5 .5-3.800 3.300 1.200 4.900L9 13.100l-4.400 2.600 1.200-4.900L2 7.500 7 7z" fill="none" stroke="#d0d0d0" strokeWidth="1.400" /></svg>
            </OmniIcon>
          </Omnibox>
          <MediaIcon width="16" height="16" viewBox="0 0 16 16">
            <path d="M1 3h9M1 6.200h9M1 9.400h6" stroke="#cfcfcf" strokeWidth="1.500" /><circle cx="11" cy="11.500" r="2.300" fill="#cfcfcf" /><path d="M12.600 11.500V3h3.200" stroke="#cfcfcf" strokeWidth="1.600" fill="none" />
          </MediaIcon>
          <Avatar>A</Avatar>
          <NavButton><svg width="4" height="16" viewBox="0 0 4 16" fill="#d0d0d0"><circle cx="2" cy="2.500" r="1.600" /><circle cx="2" cy="8" r="1.600" /><circle cx="2" cy="13.500" r="1.600" /></svg></NavButton>
        </Toolbar>
      </ToolbarBack>

      <Viewport>
        <Main>
          <Assemblies>
            {rows.map((r) => (
              <AssemblyRow key={r[0]}>
                <span>{r[0]}</span>
                <span>{r[1]}</span>
                <span>{r[2]} (<Link>{r[3]}</Link>)</span>
                <span>6</span>
                <span>{r[4]}</span>
              </AssemblyRow>
            ))}
          </Assemblies>
          <MapTitle>Chromosome 6 - NC_000006.12</MapTitle>
          <MapArea><GeneMap /></MapArea>
          <SectionBar>
            <SmallButton $raised><svg width="10" height="6" viewBox="0 0 10 6"><path d="M0 6l5-5.500L10 6z" fill="#555" /></svg></SmallButton>
            <SectionTitle>Genomic regions, transcripts, and products</SectionTitle>
            <SmallButton>
              <svg width="10" height="10" viewBox="0 0 10 10" fill="none" stroke="#777" strokeWidth="1.600"><path d="M1 5l4-3.500L9 5M1 9.300l4-3.500 4 3.500" /></svg>
            </SmallButton>
            <SmallButton>?</SmallButton>
          </SectionBar>
          <DetailLine>Go to <Link>reference sequence details</Link></DetailLine>
          <SequenceLine>
            <b>Genomic Sequence:</b>
            <Select>
              NC_000006.12 Chromosome 6 Reference GRCh38.p14 Primary Assembly
              <svg width="12" height="8" viewBox="0 0 12 8"><path d="M1.500 1.500L6 6l4.500-4.500" fill="none" stroke="#111" strokeWidth="2" /></svg>
            </Select>
          </SequenceLine>
          <NucleotideLine>
            <b>Go to nucleotide:</b>
            <Link>Graphics</Link>
            <Marker><Link $marked>FASTA</Link></Marker>
            <Link>GenBank</Link>
          </NucleotideLine>
          <Viewer>
            <ViewerToolbar />
            <Ruler />
            <SequenceBar />
            <TrackRow name="Genes, MANE Project (release v1.3)" y={28} />
            <TrackRow name="NCBI RefSeq Annotation GCF_000001405.40-RS_2023_…" y={26.5} />
            <GridOverlay width="954" height="188" viewBox="42 540 954 188">
              {majors.map((x) => <path key={x} d={`M${x} 540V728`} stroke="#000" strokeOpacity=".1" />)}
            </GridOverlay>
          </Viewer>
        </Main>
        <Side>{sideItems.map((s) => <SideItem key={s}>{s}</SideItem>)}</Side>
        <ScrollTrack>
          <svg width="9" height="5" viewBox="0 0 9 5"><path d="M0 5l4.500-5L9 5z" fill="#fff" /></svg>
          <ScrollThumb />
          <svg width="9" height="5" viewBox="0 0 9 5"><path d="M0 0h9L4.500 5z" fill="#fff" /></svg>
        </ScrollTrack>
      </Viewport>

      <Taskbar>
        <StartButton>
          <svg width="16" height="16" viewBox="0 0 16 16" fill="#fff"><path d="M0 2.300l6.500-.9v6.100H0zM7.500 1.200L16 0v7.500H7.500zM0 8.500h6.500v6.100L0 13.700zM7.500 8.500H16V16l-8.500-1.200z" /></svg>
        </StartButton>
        <SearchBox>
          <svg width="17" height="17" viewBox="0 0 17 17" fill="none" stroke="#e4ebf8" strokeWidth="1.400"><circle cx="10.300" cy="6.300" r="5.300" /><path d="M6.500 10.200L1 16" /></svg>
          <span>Type here to search</span>
          <Tent />
        </SearchBox>
        <TaskIcons />
        <Spinner>
          <svg width="9" height="6" viewBox="0 0 9 6"><path d="M1 5l3.500-3.500L8 5" stroke="#555" strokeWidth="2" fill="none" /></svg>
          <svg width="9" height="6" viewBox="0 0 9 6"><path d="M1 1l3.500 3.500L8 1" stroke="#555" strokeWidth="2" fill="none" /></svg>
        </Spinner>
        <Weather>
          <svg width="20" height="20" viewBox="0 0 20 20"><defs><linearGradient id="sun" x1="0" y1="0" x2=".7" y2="1"><stop offset="0" stopColor="#f9c13a" /><stop offset="1" stopColor="#f06c13" /></linearGradient></defs><circle cx="10" cy="10" r="10" fill="url(#sun)" /></svg>
          <span>37°C</span>
        </Weather>
        <Tray />
      </Taskbar>
      <StatusBubble>https://www.ncbi.nlm.nih.gov/nuccore/NC_000006.12?report=fasta&amp;from=31575565&amp;to=31578336</StatusBubble>
    </Screen>
  );
}
